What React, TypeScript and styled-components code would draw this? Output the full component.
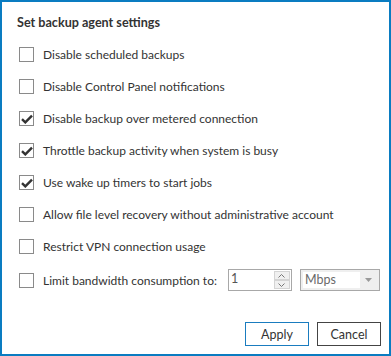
import { FC } from "react";
import styled, { createGlobalStyle } from "styled-components";

const GlobalStyle = createGlobalStyle`
  html, body {
    margin: 0;
    padding: 0;
    background: #fff;
  }
  body {
    font-family: "Lato", "Noto Sans", sans-serif;
    color: #333;
  }
`;

const Window = styled.div`
  box-sizing: border-box;
  width: 391px;
  height: 356px;
  border: 2px solid #0a7cc1;
  background: #fff;
  padding: 12px 8px 0 15px;
  display: flex;
  flex-direction: column;
`;

const Title = styled.h2`
  margin: 0 0 7px 0;
  font-size: 12.6px;
  font-weight: 700;
  color: #333;
  line-height: 18px;
`;

const List = styled.div`
  display: flex;
  flex-direction: column;
`;

const Row = styled.label<{ tall?: boolean }>`
  display: flex;
  align-items: center;
  height: ${({ tall }) => (tall ? "36px" : "31.9px")};
  font-size: 12px;
  color: #333;
`;

const Box = styled.span<{ checked?: boolean }>`
  box-sizing: border-box;
  width: 15px;
  height: 15px;
  border: 1px solid #8a8a8a;
  background: #fff;
  display: flex;
  align-items: center;
  justify-content: center;
  margin-left: 2px;
  margin-right: 9px;
  flex-shrink: 0;
`;

const Label = styled.span`
  white-space: nowrap;
`;

const SpinBox = styled.div`
  box-sizing: border-box;
  display: flex;
  width: 64px;
  height: 22px;
  border: 1px solid #a8a8a8;
  margin-left: 11px;
  background: #fff;
`;

const SpinValue = styled.span`
  flex: 1;
  padding: 0 0 0 2px;
  line-height: 18px;
  font-size: 12.5px;
  color: #555;
`;

const SpinButtons = styled.div`
  display: flex;
  flex-direction: column;
  justify-content: center;
  padding: 1px 1px 1px 0;
`;

const SpinButton = styled.span`
  box-sizing: border-box;
  width: 16px;
  height: 9px;
  background: #f0f0f0;
  border: 1px solid #d4d4d4;
  display: flex;
  align-items: center;
  justify-content: center;
`;

const Select = styled.div`
  box-sizing: border-box;
  display: flex;
  align-items: center;
  width: 80px;
  height: 22px;
  margin-left: 8px;
  border: 1px solid #a8a8a8;
  background: #efefef;
  padding: 2px;
`;

const SelectValue = styled.span`
  flex: 0 0 57px;
  height: 16px;
  background: #fff;
  line-height: 16px;
  font-size: 12.5px;
  color: #6a6a6a;
  padding-left: 2px;
  box-sizing: border-box;
`;

const SelectArrow = styled.span`
  flex: 1;
  display: flex;
  justify-content: center;
  align-items: center;
`;

const Footer = styled.div`
  margin-top: auto;
  display: flex;
  justify-content: flex-end;
  gap: 8px;
  padding-bottom: 8px;
`;

const Button = styled.button<{ primary?: boolean }>`
  box-sizing: border-box;
  width: 64px;
  height: 24px;
  background: #fff;
  border: 1px solid ${({ primary }) => (primary ? "#1a7cbf" : "#444")};
  font-family: inherit;
  font-size: 12.5px;
  color: #333;
  padding: 0;
  cursor: pointer;
`;

const Check: FC = () => (
  <svg width="12" height="10" viewBox="0 0 12 10">
    <path d="M1 5.2 L4.3 8.4 L11 1.6" fill="none" stroke="#333" strokeWidth="2.4" />
  </svg>
);

type Setting = { label: string; checked: boolean };

const settings: Setting[] = [
  { label: "Disable scheduled backups", checked: false },
  { label: "Disable Control Panel notifications", checked: false },
  { label: "Disable backup over metered connection", checked: true },
  { label: "Throttle backup activity when system is busy", checked: true },
  { label: "Use wake up timers to start jobs", checked: true },
  { label: "Allow file level recovery without administrative account", checked: false },
  { label: "Restrict VPN connection usage", checked: false },
];

const App: FC = () => (
  <>
    <GlobalStyle />
    <Window>
      <Title>Set backup agent settings</Title>
      <List>
        {settings.map((s) => (
          <Row key={s.label}>
            <Box checked={s.checked}>{s.checked && <Check />}</Box>
            <Label>{s.label}</Label>
          </Row>
        ))}
        <Row tall>
          <Box />
          <Label>Limit bandwidth consumption to:</Label>
          <SpinBox>
            <SpinValue>1</SpinValue>
            <SpinButtons>
              <SpinButton>
                <svg width="7" height="4" viewBox="0 0 7 4">
                  <path d="M0.5 3.5 L3.5 0.5 L6.5 3.5" fill="none" stroke="#777" />
                </svg>
              </SpinButton>
              <SpinButton>
                <svg width="7" height="4" viewBox="0 0 7 4">
                  <path d="M0.5 0.5 L3.5 3.5 L6.5 0.5" fill="none" stroke="#777" />
                </svg>
              </SpinButton>
            </SpinButtons>
          </SpinBox>
          <Select>
            <SelectValue>Mbps</SelectValue>
            <SelectArrow>
              <svg width="7" height="4" viewBox="0 0 7 4">
                <path d="M0 0 L7 0 L3.5 4 Z" fill="#999" />
              </svg>
            </SelectArrow>
          </Select>
        </Row>
      </List>
      <Footer>
        <Button primary>Apply</Button>
        <Button>Cancel</Button>
      </Footer>
    </Window>
  </>
);

export default App;
